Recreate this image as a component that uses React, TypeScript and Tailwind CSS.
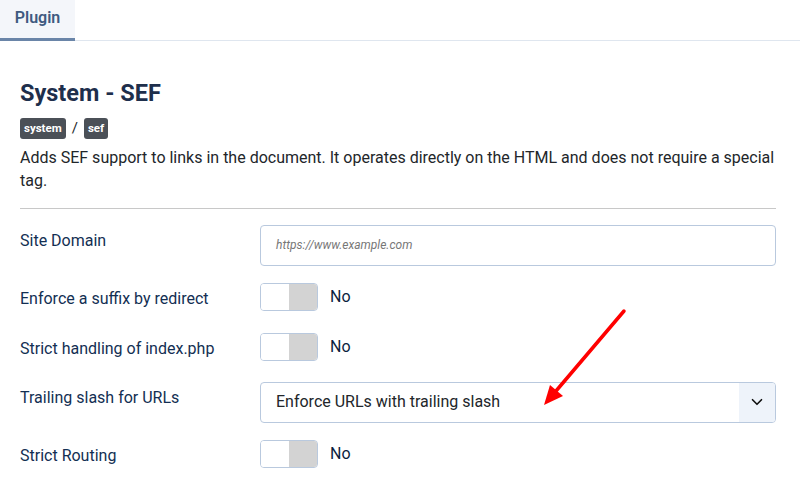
import { ChevronDown } from "lucide-react";

const FONT = { fontFamily: "Roboto, 'Noto Sans', Arial, sans-serif" };

function Toggle() {
  return (
    <div className="flex items-center gap-3">
      <div className="flex h-[28px] w-[58px] overflow-hidden rounded-[4px] border border-[#b9c9de]">
        <div className="w-1/2 bg-white" />
        <div className="w-1/2 bg-[#d3d3d3]" />
      </div>
      <span className="text-[16px] text-[#0b1e3e]">No</span>
    </div>
  );
}

function Row({
  label,
  children,
  mb,
}: {
  label: string;
  children: React.ReactNode;
  mb: string;
}) {
  return (
    <div className={`flex items-start ${mb}`}>
      <div className="w-[240px] shrink-0 pt-[5px] text-[16px] leading-[22px] text-[#132f53]">
        {label}
      </div>
      <div className="flex-1">{children}</div>
    </div>
  );
}

export default function App() {
  return (
    <div className="relative h-[497px] w-[800px] overflow-hidden bg-white" style={FONT}>
      <div className="flex h-[41px] border-b border-[#dfe6ef]">
        <div className="flex h-[41px] w-[75px] items-center justify-center border-b-[3px] border-[#6a85a8] bg-[#f4f6fa] pb-[2px] text-[16px] font-semibold text-[#3f5a80]">
          Plugin
        </div>
      </div>

      <div className="w-[776px] pl-[20px]">
        <h1 className="mt-[38px] text-[23.5px] font-bold leading-[28px] text-[#1e2f4c]">
          System - SEF
        </h1>
        <div className="mt-[10px] flex items-center gap-[6px]">
          <span className="rounded-[3px] bg-[#4b5057] px-[4px] py-[3px] text-[11.5px] font-bold leading-[15px] text-white">
            system
          </span>
          <span className="text-[15px] text-[#22262a]">/</span>
          <span className="rounded-[3px] bg-[#4b5057] px-[4px] py-[3px] text-[11.5px] font-bold leading-[15px] text-white">
            sef
          </span>
        </div>
        <p className="mt-[6px] text-[16px] leading-[23px] text-[#22262a]">
          Adds SEF support to links in the document. It operates directly on the HTML and does not require a special tag.
        </p>
        <div className="mb-[16px] mt-[16px] h-px bg-[#c8c8c8]" />

        <Row label="Site Domain" mb="mb-[17px]">
          <div className="flex h-[41px] items-center rounded-[4px] border border-[#b9c9de] px-[15px] text-[12px] italic text-[#777]">
            https://www.example.com
          </div>
        </Row>
        <Row label="Enforce a suffix by redirect" mb="mb-[22px]">
          <Toggle />
        </Row>
        <Row label="Strict handling of index.php" mb="mb-[21px]">
          <Toggle />
        </Row>
        <Row label="Trailing slash for URLs" mb="mb-[17px]">
          <div className="flex h-[41px] items-stretch overflow-hidden rounded-[4px] border border-[#b9c9de]">
            <div className="flex flex-1 items-center px-[15px] text-[16px] text-[#22262a]">
              Enforce URLs with trailing slash
            </div>
            <div className="flex w-[36px] items-center justify-center bg-[#eef3fa]">
              <ChevronDown size={18} strokeWidth={2.2} color="#111" />
            </div>
          </div>
        </Row>
        <Row label="Strict Routing" mb="mb-0">
          <Toggle />
        </Row>
      </div>

      <svg className="pointer-events-none absolute left-0 top-0" width="800" height="497">
        <line x1="624" y1="311" x2="556" y2="391" stroke="#ff0000" strokeWidth="3.5" strokeLinecap="round" />
        <polygon points="544,405 550,385 563,396" fill="#ff0000" />
      </svg>
    </div>
  );
}
